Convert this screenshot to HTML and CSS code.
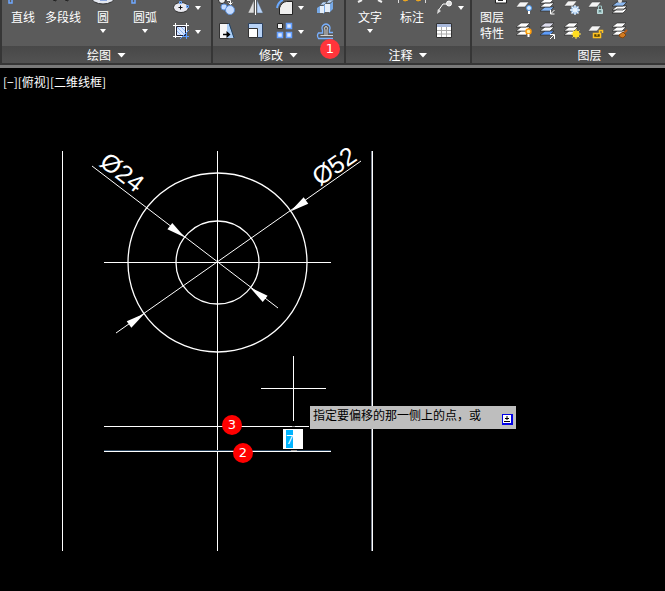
FILE: index.html
```html
<!DOCTYPE html>
<html lang="zh-CN">
<head>
<meta charset="utf-8">
<title>二维线框</title>
<link rel="stylesheet" href="styles.css">
</head>
<body>
<svg class="defs" aria-hidden="true">
  <defs>
    <symbol id="stack" viewBox="0 0 20 20">
      <path d="M6 10h9l-4 4H1z" fill="#fff" stroke="#222" stroke-width=".6"/>
      <path d="M6 6h9l-4 4H1z" fill="#fff" stroke="#222" stroke-width=".6"/>
      <path d="M6 2h9l-4 4H1z" fill="#fff" stroke="#222" stroke-width=".6"/>
    </symbol>
    <symbol id="sheet" viewBox="0 0 20 20">
      <path d="M5 4h9l-4 5H1z" fill="#f4f4f4" stroke="#444" stroke-width=".6"/>
    </symbol>
  </defs>
</svg>
<header class="ribbon">
  <section class="panel draw">
    <div class="tools">
      <button class="tool"><svg class="top" viewBox="0 0 40 8"><path d="M6 0v3h3V0" fill="none" stroke="#6fa8ff" stroke-width="1.500"/></svg><span>直线</span></button>
      <button class="tool"><svg class="top" viewBox="0 0 40 8"><path d="M10 0l3 1V0M22 0l3 1V0" fill="none" stroke="#222"/></svg><span>多段线</span></button>
      <button class="tool"><svg class="top" viewBox="0 0 40 8"><ellipse cx="20" cy="-3" rx="12" ry="7" fill="#e4e8f0" stroke="#333"/><path d="M17 0h7" stroke="#36c"/></svg><span>圆</span><i class="caret small"></i></button>
      <button class="tool"><svg class="top" viewBox="0 0 40 8"><path d="M7 0v3h3V0" fill="none" stroke="#6fa8ff" stroke-width="1.500"/></svg><span>圆弧</span><i class="caret small"></i></button>
      <div class="icons draw-icons">
        <button aria-label="椭圆"><svg class="short" viewBox="0 0 20 16"><ellipse cx="9" cy="7.500" rx="7.500" ry="5" fill="#e9e9ef" stroke="#333"/><path d="M6.500 7.500h4M8.500 5.500v4" stroke="#111"/><path d="M7.500 1.500h2v2h-2zM14.500 5.500h2v2h-2z" fill="#356" stroke="#6fa8ff"/></svg><i class="caret small"></i></button>
        <button aria-label="图案填充"><svg viewBox="0 0 20 20"><path d="M4 4h10v10H4z" fill="#d7e6ff"/><path d="M5 5l9 9M5 9l5 5M9 5l5 5" stroke="#8db6f4"/><path d="M3.500 1v15M1 3.500h16M14.500 1v15M1 14.500h16" stroke="#fff"/><path d="M4.500 4.500h9v9h-9z" fill="none" stroke="#223"/><path d="M8 17l9-9M14.500 10v7M10 14.500h7" stroke="#5a9cff"/></svg><i class="caret small"></i></button>
      </div>
    </div>
    <button class="title">绘图<i class="caret"></i></button>
  </section>
  <section class="panel modify">
    <div class="tools">
      <div class="icons modify-icons">
        <button aria-label="复制"><svg class="short" viewBox="0 0 20 16"><circle cx="5" cy="0" r="3.500" fill="#eee" stroke="#222"/><circle cx="7" cy="7" r="3" fill="#c6dcff" stroke="#5a8ed8"/><circle cx="13" cy="10" r="4.500" fill="#c6dcff" stroke="#5a8ed8"/><path d="M10 .5h3.500V4M11.500 2.500l2 2 2-2" fill="none" stroke="#fff"/></svg></button>
        <button aria-label="镜像"><svg class="short" viewBox="0 0 20 16"><path d="M8 0v13H2z" fill="#ddd" stroke="#555" stroke-width=".5"/><path d="M11 0v13h6z" fill="#b9d3f8" stroke="#567" stroke-width=".5"/><path d="M9.500 0v15" stroke="#fff"/></svg></button>
        <button aria-label="圆角"><svg class="short" viewBox="0 0 20 16"><path d="M4.500 14.500V8q2-6 7-6.500h6v13z" fill="#eee" stroke="#222"/><path d="M2 8q1-6 6-8" fill="none" stroke="#69a9ff" stroke-width="2"/></svg><i class="caret small"></i></button>
        <button aria-label="分解"><svg class="short" viewBox="0 0 20 16"><path d="M1 8l3-2v7H1zM7 6l3-3v8l-3 3zM13 5l4-4v8l-4 4z" fill="#77a9e6"/><path d="M4 6h4v7H4zM9 4h5v8H9z" fill="#e4edf8"/><path d="M4 5l3-3h4L8 5zM10 3l3-3h5l-4 3z" fill="#b9d3f3" stroke="#456" stroke-width=".5"/></svg></button>
        <button aria-label="拉伸"><svg viewBox="0 0 20 20"><path d="M2.500 1.500h9v15h-9z" fill="#f5f5f5" stroke="#333"/><path d="M10 2h2l5 14h-7z" fill="#aacdf6"/><path d="M12 1l5 15" stroke="#246"/><path d="M6 12.500h5" stroke="#000" stroke-width="1.500"/><path d="M9.500 9l4 3.500-4 3.500z" fill="#000"/></svg></button>
        <button aria-label="缩放"><svg viewBox="0 0 20 20"><path d="M2.500 1.500h14v14h-14z" fill="#b7d2f6" stroke="#2d4260"/><path d="M2.500 6.500h9v9h-9z" fill="#fff" stroke="#333"/></svg></button>
        <button aria-label="阵列"><svg viewBox="0 0 20 20"><path d="M2.500 1.500h5v5h-5z" fill="#eee" stroke="#222"/><path d="M11.500 1.500h5v5h-5zM2.500 10.500h5v5h-5zM11.500 10.500h5v5h-5z" fill="#d6e5ff" stroke="#65a0ff" stroke-width="1.500"/></svg><i class="caret small"></i></button>
        <button aria-label="偏移"><svg viewBox="0 0 20 20"><path d="M17 16.500H2.500q-2-3 0-5.500h4V8q-1-2 0-4 3.500-4 7 0 1 2 0 4v2.500H17" fill="none" stroke="#78b0ff" stroke-width="1.300"/><path d="M17 13.500H4.500M9 13V8q-1-2 0-3 1-1 2 0 1 1 0 3v5" fill="none" stroke="#f2f2f2" stroke-width=".8"/></svg></button>
      </div>
    </div>
    <button class="title">修改<i class="caret"></i></button>
    <b class="badge step-one">1</b>
  </section>
  <section class="panel annotate">
    <div class="tools">
      <button class="tool"><svg class="top" viewBox="0 0 40 8"><path d="M8 2l4-2M32 2l-4-2" stroke="#eee" stroke-width="2"/></svg><span>文字</span><i class="caret small"></i></button>
      <button class="tool"><svg class="top" viewBox="0 0 40 8"><path d="M6.500 0v3M33.500 0v3" stroke="#ddd"/><path d="M11 0l2 1 3-1M24 0l2 1 3-1" fill="#f7b52c" stroke="#f2a91c"/></svg><span>标注</span></button>
      <div class="icons annotate-icons">
        <button aria-label="引线"><svg class="short" viewBox="0 0 20 16"><path d="M3 11l5-7h4" fill="none" stroke="#fff"/><path d="M2 14l1-5 3 2z" fill="#ddd"/><circle cx="14" cy="3.500" r="2.500" fill="#ddd" stroke="#fff"/></svg><i class="caret small"></i></button>
        <button aria-label="表格"><svg viewBox="0 0 20 20"><path d="M1.500 1.500h15v14h-15z" fill="#fff" stroke="#333"/><path d="M2 2h14v3H2z" fill="#a7b7d9"/><path d="M2 8.500h14M2 12h14M6.500 5v10M11.500 5v10" stroke="#aaa"/></svg></button>
      </div>
    </div>
    <button class="title">注释<i class="caret"></i></button>
  </section>
  <section class="panel layers">
    <div class="tools">
      <button class="tool props"><svg class="top" viewBox="0 0 40 8"><path d="M23.500-2h11v5h-11z" fill="#fff" stroke="#222"/><path d="M26 .5h5" stroke="#222"/></svg><span>图层<br>特性</span></button>
      <div class="icons layer-icons">
        <button aria-label="关闭图层"><svg class="short" viewBox="0 0 20 16"><use href="#sheet" y="-2" width="20" height="20"/><circle cx="14" cy="8" r="2.500" fill="#d8ecff" stroke="#4c98f0"/><path d="M14 11v3" stroke="#fff" stroke-width="2"/></svg></button>
        <button aria-label="隔离"><svg class="short" viewBox="0 0 20 16"><path d="M6 7h9l-4 4H1z" fill="#82b5f5" stroke="#222" stroke-width=".6"/><path d="M6 3h9l-4 4H1zM6-1h9l-4 4H1z" fill="#fff" stroke="#222" stroke-width=".6"/><path d="M15.500 10l-4 4m0-4v4h4" fill="none" stroke="#fff"/></svg></button>
        <button aria-label="冻结"><svg class="short" viewBox="0 0 20 16"><use href="#sheet" y="-3" width="20" height="20"/><circle cx="12" cy="10" r="4" fill="#7ba9dd"/><path d="M12 5v10M7 10h10M8.500 6.500l7 7M15.500 6.500l-7 7" stroke="#e8f4ff" stroke-width="1.300"/></svg></button>
        <button aria-label="锁定"><svg class="short" viewBox="0 0 20 16"><use href="#sheet" y="-2" width="20" height="20"/><path d="M11.500 9V6h3v3" fill="none" stroke="#9cc3c3"/><path d="M10.500 9.500h5v4h-5z" fill="#9fc4c4" stroke="#bcdada"/><path d="M13 10v2" stroke="#355"/></svg></button>
        <button aria-label="置为当前"><svg class="short" viewBox="0 0 20 16"><path d="M6 9h10l-4 4H1zM6 6h10l-4 4H1z" fill="#fff" stroke="#222" stroke-width=".7"/><path d="M6 2h10l-4 4H1z" fill="#8db8ef" stroke="#222" stroke-width=".7"/><circle cx="9" cy="1" r="2" fill="#ddd"/></svg></button>
        <button aria-label="打开图层"><svg viewBox="0 0 20 20"><use href="#stack" y="-1" width="20" height="20"/><circle cx="13.500" cy="9.500" r="2.500" fill="#fff0a0" stroke="#ff9b0b" stroke-width="1.500"/><path d="M13.500 12v3" stroke="#fff" stroke-width="2"/></svg></button>
        <button aria-label="取消隔离"><svg viewBox="0 0 20 20"><path d="M6 9h9l-4 4H1z" fill="#5f9dfa" stroke="#222" stroke-width=".6"/><path d="M6 5h9l-4 4H1z" fill="#fff" stroke="#222" stroke-width=".6"/><path d="M6 1h9l-4 4H1z" fill="#dde" stroke="#222" stroke-width=".6"/><path d="M11 17l4-4m-4-.5h4.500V17" fill="none" stroke="#fff"/></svg></button>
        <button aria-label="解冻"><svg viewBox="0 0 20 20"><use href="#stack" y="-1" width="20" height="20"/><path d="M13 7v10M8 12h10M9.500 8.500l7 7M16.500 8.500l-7 7" stroke="#ffe45c"/><circle cx="13" cy="12" r="3.500" fill="#ffdd20"/></svg></button>
        <button aria-label="解锁"><svg viewBox="0 0 20 20"><use href="#sheet" width="20" height="20"/><path d="M12.500 11V8.500h3V11" fill="none" stroke="#ffc220" stroke-width="1.500"/><path d="M6.500 11.500h7v4h-7z" fill="#554000" stroke="#ffc220" stroke-width="1.500"/><path d="M10 12v2" stroke="#ffc220"/></svg></button>
        <button aria-label="匹配图层"><svg viewBox="0 0 20 20"><use href="#stack" y="-1" width="20" height="20"/><path d="M16 8l-3 3" stroke="#b85d18" stroke-width="2"/><path d="M8 13l4-3 3 3-3 3-3-1z" fill="#d17b22" stroke="#874407"/></svg></button>
      </div>
    </div>
    <button class="title">图层<i class="caret"></i></button>
  </section>
</header>
<main class="viewport">
  <div class="view-label">[−][俯视][二维线框]</div>
  <svg class="drawing" viewBox="0 68 665 523" width="665" height="523" fill="none" stroke="#fff">
    <path d="M62.500 151v400M217.500 151v400M372.500 151v400M104 262.500h227M104 426.500h205M104 451.500h227M293.500 356v65M261 388.500h65"/>
    <path d="M371.500 151v400" stroke="#777f8c"/>
    <path d="M104 450.500h227" stroke="#29435c"/>
    <path d="M292 426.500h3M291 450.500h6" stroke="#999"/>
    <path d="M92 166l186 142M116 333l245-172"/>
    <circle cx="217.500" cy="262.500" r="41.500" stroke-width="1.300"/>
    <circle cx="217.500" cy="262.500" r="89.500" stroke-width="1.300"/>
    <g fill="#fff" stroke="none" transform="translate(217.500 262.500)">
      <path d="M41 0l19-4v8z" transform="rotate(37.400)"/>
      <path d="M41 0l19-4v8z" transform="rotate(217.400)"/>
      <path d="M89 0l19-4v8z" transform="rotate(145)"/>
      <path d="M89 0l19-4v8z" transform="rotate(325)"/>
    </g>
    <text class="dimension" transform="translate(117 179) rotate(37.400)">Ø24</text>
    <text class="dimension" transform="translate(339 173) rotate(-35)">Ø52</text>
  </svg>
  <b class="badge step-two">2</b>
  <b class="badge step-three">3</b>
  <input class="distance" aria-label="偏移距离" value="7">
  <div class="prompt"><span>指定要偏移的那一侧上的点，或</span>
    <button aria-label="选项"><svg viewBox="0 0 12 12"><path d="M0 0h11v11H0z" fill="#0000e8"/><path d="M1 1h8v8H1z" fill="#fff"/><path d="M5 2v4M3 4.500h4M2 7.500h6" stroke="#000"/></svg></button>
  </div>
</main>
</body>
</html>
```
FILE: styles.css
```css
* { box-sizing: border-box; }
body {
  margin: 0;
  min-height: 100vh;
  display: flex;
  flex-direction: column;
  overflow: hidden;
  background: #000;
  color: #fff;
  font: 12px/16px "Noto Sans CJK SC", sans-serif;
}
button {
  margin: 0;
  padding: 0;
  border: 0;
  background: none;
  color: inherit;
  font: inherit;
}
svg { display: block; flex: none; }
.defs { position: absolute; width: 0; height: 0; }

.ribbon {
  display: grid;
  grid-template-columns: 209px 131px 124px 250px;
  gap: 2px;
  padding: 0 0 2px 2px;
  overflow: hidden;
  background: #363636;
  border-bottom: 3px solid #7a7a7a;
}
.panel { position: relative; background: #5b5b5b; }
.tools { display: flex; height: 46px; }
.title {
  display: flex;
  align-items: center;
  justify-content: center;
  gap: 6px;
  width: 100%;
  height: 17px;
  padding-top: 1px;
  background: linear-gradient(#484848, #525252);
}
.caret {
  flex: none;
  width: 9px;
  height: 5px;
  background: #fff;
  clip-path: polygon(0 0, 100% 0, 50% 100%);
}
.caret.small { width: 6px; height: 4px; }
.tool {
  display: flex;
  flex-direction: column;
  align-items: center;
  width: 40px;
  white-space: nowrap;
}
.tool .top { width: 40px; height: 8px; margin-bottom: 1px; }
.tool .caret { margin-top: 4px; }
.tool:nth-child(4) { width: 44px; }

.icons { display: grid; grid-template-rows: 16px 20px; row-gap: 6px; align-content: start; }
.icons button { display: flex; align-items: center; gap: 3px; }
.icons svg { width: 20px; height: 20px; }
.icons .short { height: 16px; }
.draw-icons { margin-left: 5px; }
.modify-icons { grid-template-columns: 29px 29px 41px 20px; margin-left: 4px; }
.annotate-icons { margin-left: 1px; }
.layer-icons { grid-template-columns: repeat(5, 24px); margin-left: 3px; }
.annotate .tools { padding-left: 4px; }
.annotate .tool + .tool { width: 44px; }
.draw .tools { padding-left: 1px; }

.badge {
  position: absolute;
  width: 20px;
  height: 20px;
  border-radius: 50%;
  background: #f00;
  font: 13px/20px "DejaVu Sans", sans-serif;
  text-align: center;
}
.step-one { left: 107px; top: 39px; background: #ff353b; }
.step-two { left: 233px; top: 375px; }
.step-three { left: 222px; top: 347px; }

.viewport { position: relative; flex: 1; }
.view-label { position: absolute; left: 3px; top: 6px; }
.dimension {
  fill: #fff;
  stroke: none;
  font: 25px "Liberation Sans", sans-serif;
  text-anchor: middle;
}
.distance {
  position: absolute;
  left: 283px;
  top: 361px;
  width: 20px;
  height: 20px;
  padding: 0 3px;
  border: 0;
  background: linear-gradient(#00b4ff, #00b4ff) 3px 1px / 7px 18px no-repeat #fff;
  color: #fff;
  font: 13px/20px "Open Sans", sans-serif;
}
.prompt {
  position: absolute;
  left: 310px;
  top: 338px;
  display: flex;
  justify-content: space-between;
  width: 206px;
  height: 23px;
  padding: 1px 2px 3px 3px;
  background: #bebebe;
  color: #000;
  white-space: nowrap;
}
.prompt button { align-self: flex-end; }
.prompt svg { width: 12px; height: 12px; }
```
